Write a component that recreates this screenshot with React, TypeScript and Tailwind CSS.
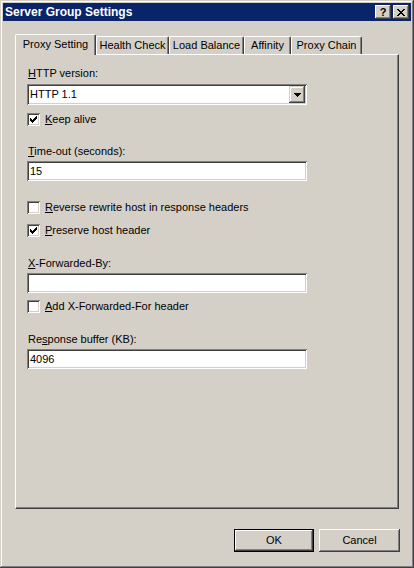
import type { ReactNode } from "react";

const raised =
  "shadow-[inset_-1px_-1px_#404040,inset_1px_1px_#ffffff,inset_-2px_-2px_#808080,inset_2px_2px_#d4d0c8]";
const sunken =
  "shadow-[inset_1px_1px_#808080,inset_-1px_-1px_#ffffff,inset_2px_2px_#404040,inset_-2px_-2px_#d4d0c8]";

function Check() {
  return (
    <svg width="7" height="7" viewBox="0 0 7 7" shapeRendering="crispEdges">
      <path
        fill="#000"
        d="M6 0h1v1h-1z M5 1h2v1h-2z M0 2h1v1h-1z M4 2h3v1h-3z M0 3h2v1h-2z M3 3h3v1h-3z M0 4h5v1h-5z M1 5h3v1h-3z M2 6h1v1h-1z"
      />
    </svg>
  );
}

function Checkbox({
  checked,
  children,
  className = "",
}: {
  checked?: boolean;
  children: ReactNode;
  className?: string;
}) {
  return (
    <div className={`flex h-[13px] items-center gap-[5px] ${className}`}>
      <div
        className={`flex h-[13px] w-[13px] shrink-0 items-center justify-center bg-white ${sunken}`}
      >
        {checked ? <Check /> : null}
      </div>
      <span className="leading-[13px]">{children}</span>
    </div>
  );
}

function Label({
  children,
  className = "",
}: {
  children: ReactNode;
  className?: string;
}) {
  return (
    <div className={`h-[13px] pl-px leading-[13px] ${className}`}>
      {children}
    </div>
  );
}

function TextBox({ value, className = "" }: { value?: string; className?: string }) {
  return (
    <div
      className={`flex h-[20px] w-[280px] items-center bg-white pl-[3px] ${sunken} ${className}`}
    >
      {value}
    </div>
  );
}

function Tab({
  label,
  w,
  selected,
}: {
  label: string;
  w: string;
  selected?: boolean;
}) {
  if (selected) {
    return (
      <div
        className={`relative top-px z-10 flex h-[21px] ${w} items-center justify-center rounded-t-[2px] border-l border-t border-r border-white border-r-[#404040] bg-[#d4d0c8] pb-[2px] shadow-[inset_-1px_0_#808080]`}
      >
        {label}
      </div>
    );
  }
  return (
    <div
      className={`flex h-[18px] ${w} items-center justify-center rounded-t-[2px] border-l border-t border-r border-white border-r-[#404040] shadow-[inset_-1px_0_#808080]`}
    >
      {label}
    </div>
  );
}

function Button({
  children,
  isDefault,
  w,
}: {
  children: ReactNode;
  isDefault?: boolean;
  w: string;
}) {
  if (isDefault) {
    return (
      <div className={`h-[23px] ${w} border border-black`}>
        <div className={`flex h-full w-full items-center justify-center ${raised}`}>
          {children}
        </div>
      </div>
    );
  }
  return (
    <div className={`flex h-[23px] ${w} items-center justify-center ${raised}`}>
      {children}
    </div>
  );
}

export default function App() {
  return (
    <div className="font-['Liberation_Sans',Arial,sans-serif] text-[11px] text-black">
      <div
        className={`flex h-[568px] w-[414px] flex-col bg-[#d4d0c8] p-[3px] shadow-[inset_-1px_-1px_#404040,inset_1px_1px_#d4d0c8,inset_-2px_-2px_#808080,inset_2px_2px_#ffffff]`}
      >
        {/* title bar */}
        <div className="flex h-[18px] items-center justify-between bg-[#0a246a] pl-[2px] pr-[2px]">
          <span className="text-[12px] font-bold leading-[14px] text-white">
            Server Group Settings
          </span>
          <div className="flex items-center gap-[2px]">
            <div
              className={`flex h-[14px] w-[16px] items-center justify-center bg-[#d4d0c8] ${raised}`}
            >
              <span className="text-[11px] font-bold leading-none">?</span>
            </div>
            <div
              className={`flex h-[14px] w-[16px] items-center justify-center bg-[#d4d0c8] ${raised}`}
            >
              <svg width="8" height="7" viewBox="0 0 8 7" shapeRendering="crispEdges">
                <path
                  fill="#000"
                  d="M0 0h2v1h-2z M6 0h2v1h-2z M1 1h2v1h-2z M5 1h2v1h-2z M2 2h4v1h-4z M3 3h2v1h-2z M2 4h4v1h-4z M1 5h2v1h-2z M5 5h2v1h-2z M0 6h2v1h-2z M6 6h2v1h-2z"
                />
              </svg>
            </div>
          </div>
        </div>

        {/* body */}
        <div className="flex flex-1 flex-col px-[12px] pt-[13px]">
          <div className="flex h-[20px] items-end">
            <Tab label="Proxy Setting" w="w-[81px]" selected />
            <Tab label="Health Check" w="w-[73px]" />
            <Tab label="Load Balance" w="w-[75px]" />
            <Tab label="Affinity" w="w-[47px]" />
            <Tab label="Proxy Chain" w="w-[71px]" />
          </div>

          <div className="flex h-[455px] w-[384px] flex-col border-l border-t border-r border-b border-white border-r-[#404040] border-b-[#404040] pl-[11px] pt-[12px] shadow-[inset_-1px_-1px_#808080]">
            <Label>
              <u>H</u>TTP version:
            </Label>
            <div
              className={`mt-[4px] flex h-[21px] w-[280px] items-center justify-between bg-white pl-[3px] pr-[2px] ${sunken}`}
            >
              <span>HTTP 1.1</span>
              <div
                className={`flex h-[17px] w-[16px] items-center justify-center bg-[#d4d0c8] shadow-[inset_-1px_-1px_#404040,inset_1px_1px_#d4d0c8,inset_-2px_-2px_#808080,inset_2px_2px_#ffffff]`}
              >
                <svg width="7" height="4" viewBox="0 0 7 4" shapeRendering="crispEdges">
                  <path fill="#000" d="M0 0h7v1h-7z M1 1h5v1h-5z M2 2h3v1h-3z M3 3h1v1h-1z" />
                </svg>
              </div>
            </div>
            <Checkbox checked className="mt-[8px]">
              <u>K</u>eep alive
            </Checkbox>

            <Label className="mt-[19px]">
              <u>T</u>ime-out (seconds):
            </Label>
            <TextBox value="15" className="mt-[3px]" />

            <Checkbox className="mt-[20px]">
              <u>R</u>everse rewrite host in response headers
            </Checkbox>
            <Checkbox checked className="mt-[10px]">
              <u>P</u>reserve host header
            </Checkbox>

            <Label className="mt-[20px]">
              <u>X</u>-Forwarded-By:
            </Label>
            <TextBox className="mt-[3px]" />
            <Checkbox className="mt-[7px]">
              <u>A</u>dd X-Forwarded-For header
            </Checkbox>

            <Label className="mt-[20px]">
              Re<u>s</u>ponse buffer (KB):
            </Label>
            <TextBox value="4096" className="mt-[3px]" />
          </div>

          <div className="mt-[20px] flex w-[385px] justify-end gap-[5px]">
            <Button isDefault w="w-[80px]">
              OK
            </Button>
            <Button w="w-[81px]">Cancel</Button>
          </div>
        </div>
      </div>
    </div>
  );
}
